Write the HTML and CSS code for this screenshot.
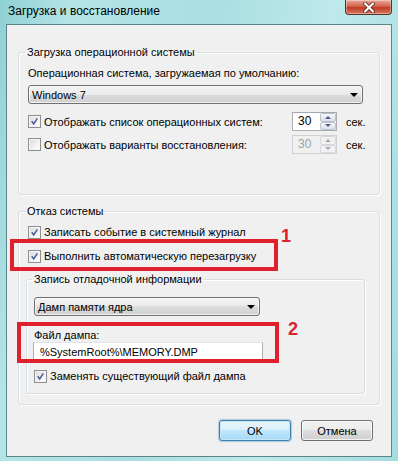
FILE: index.html
```html
<!DOCTYPE html>
<html lang="ru">
<head>
  <meta charset="UTF-8" />
  <title>Загрузка и восстановление</title>
  <link rel="stylesheet" href="styles.css">
</head>
<body>
  <div class="window">
    <div class="titlebar">
      <span class="title">Загрузка и восстановление</span>
      <div class="close-btn">
        <svg width="16" height="11" viewBox="0 0 16 11"><path d="M4 1.5 L12 9.5 M12 1.5 L4 9.5" stroke="#4a1a12" stroke-width="3.6" stroke-linecap="round"/><path d="M4 1.5 L12 9.5 M12 1.5 L4 9.5" stroke="#fff" stroke-width="2.2" stroke-linecap="round"/></svg>
      </div>
    </div>

    <div class="client">
      <fieldset class="group group-boot">
        <legend>Загрузка операционной системы</legend>
        <div class="group-body boot-body">
          <div class="label">Операционная система, загружаемая по умолчанию:</div>
          <div class="combo combo-os"><span>Windows 7</span><i class="arrow"></i></div>
          <div class="row row-spin">
            <label class="check check-wide"><span class="cb"><svg viewBox="0 0 13 13"><path d="M3.2 6.2 L5.6 9.4 L9.8 2.8" fill="none" stroke="#4a5a9a" stroke-width="1.8"/></svg></span>Отображать список операционных систем:</label>
            <div class="spin"><span class="spin-val">30</span><div class="spin-btns"><i class="up"></i><i class="down"></i></div></div>
            <span class="unit">сек.</span>
          </div>
          <div class="row row-spin row-second">
            <label class="check check-wide"><span class="cb"></span>Отображать варианты восстановления:</label>
            <div class="spin spin-off"><span class="spin-val">30</span><div class="spin-btns"><i class="up"></i><i class="down"></i></div></div>
            <span class="unit">сек.</span>
          </div>
        </div>
      </fieldset>

      <fieldset class="group group-fail">
        <legend>Отказ системы</legend>
        <div class="group-body fail-body">
          <label class="check"><span class="cb"><svg viewBox="0 0 13 13"><path d="M3.2 6.2 L5.6 9.4 L9.8 2.8" fill="none" stroke="#4a5a9a" stroke-width="1.8"/></svg></span>Записать событие в системный журнал</label>
          <label class="check check-gap"><span class="cb"><svg viewBox="0 0 13 13"><path d="M3.2 6.2 L5.6 9.4 L9.8 2.8" fill="none" stroke="#4a5a9a" stroke-width="1.8"/></svg></span>Выполнить автоматическую перезагрузку</label>

          <fieldset class="group group-debug">
            <legend>Запись отладочной информации</legend>
            <div class="group-body debug-body">
              <div class="combo combo-dump"><span>Дамп памяти ядра</span><i class="arrow"></i></div>
              <div class="label label-file">Файл дампа:</div>
              <div class="edit">%SystemRoot%\MEMORY.DMP</div>
              <label class="check check-replace"><span class="cb"><svg viewBox="0 0 13 13"><path d="M3.2 6.2 L5.6 9.4 L9.8 2.8" fill="none" stroke="#4a5a9a" stroke-width="1.8"/></svg></span>Заменять существующий файл дампа</label>
            </div>
          </fieldset>
        </div>
      </fieldset>

      <div class="buttons">
        <button class="btn btn-default">OK</button>
        <button class="btn">Отмена</button>
      </div>
    </div>

    <div class="mark mark-1"></div>
    <span class="mark-num num-1">1</span>
    <div class="mark mark-2"></div>
    <span class="mark-num num-2">2</span>
  </div>
</body>
</html>
```

FILE: styles.css
```css
body { margin: 0; font-family: "Liberation Sans", Arial, sans-serif; font-size: 11px; color: #000; }
.window { position: relative; width: 398px; height: 461px; box-sizing: border-box; padding: 0 6px 5px 6px; background: linear-gradient(100deg, #8fd0d4 0%, #b4e4e6 15%, #a9dfe1 45%, #bfe9ea 70%, #a3dcdf 100%); overflow: hidden; }
.titlebar { height: 24px; display: flex; align-items: flex-start; justify-content: space-between; }
.title { margin: 3px 0 0 2px; line-height: 16px; font-size: 12px; }
.close-btn { width: 45px; height: 14px; border: 1px solid #5a3028; border-top: none; border-radius: 0 0 4px 4px; background: linear-gradient(#e9a99a, #d1634c 45%, #c13b22 55%, #d67a62); display: flex; align-items: center; justify-content: center; box-shadow: inset 0 0 0 1px rgba(255,255,255,0.35); }

.client { height: 433px; box-sizing: border-box; border: 1px solid #5c8589; background: #f0f0f0; padding: 19px 11px 0 11px; }

.group { margin: 0; padding: 0; border: 1px solid #d5dfe5; border-radius: 3px; box-shadow: inset 1px 1px 0 #fff, 1px 1px 0 #fff; min-width: 0; }
.group legend { padding: 0 2px; margin-left: 6px; line-height: 16px; }
.group-body { display: flex; flex-direction: column; align-items: flex-start; }
.boot-body { padding: 5px 16px 40px 9px; }
.label { line-height: 16px; }

.combo { box-sizing: border-box; height: 19px; border: 1px solid #707070; border-radius: 3px; background: linear-gradient(#f2f2f2, #ebebeb 50%, #dddddd 50%, #cfcfcf); box-shadow: inset 0 0 0 1px rgba(255,255,255,0.7); display: flex; align-items: center; justify-content: space-between; padding: 0 4px 0 3px; }
.combo span { line-height: 16px; }
.arrow { width: 0; height: 0; border-left: 4px solid transparent; border-right: 4px solid transparent; border-top: 4px solid #000; }
.combo-os { width: 335px; margin-top: 4px; }

.row { display: flex; align-items: center; }
.row-spin { margin-top: 8px; height: 19px; }
.row-second { margin-top: 4px; }

.check { display: flex; align-items: center; line-height: 16px; height: 16px; white-space: nowrap; }
.check-wide { width: 264px; }
.cb { width: 13px; height: 13px; flex: none; box-sizing: border-box; border: 1px solid #8e8f8f; background: linear-gradient(135deg, #d8d8d8, #f7f7f7 70%, #ffffff); box-shadow: inset 0 0 0 1px #f4f4f4; margin-right: 3px; display: flex; }
.cb svg { width: 11px; height: 11px; }

.spin { box-sizing: border-box; width: 45px; height: 19px; border: 1px solid #abadb3; border-top-color: #a3a7b2; background: #fff; display: flex; }
.spin-val { flex: 1; padding-left: 5px; line-height: 17px; font-size: 12px; }
.spin-btns { width: 16px; display: flex; flex-direction: column; }
.spin-btns i { flex: 1; border: 1px solid #bcc3cc; border-radius: 2px; background: linear-gradient(#f4f6f9, #dde3ea); display: flex; align-items: center; justify-content: center; }
.spin-btns i::after { content: ""; border-left: 3px solid transparent; border-right: 3px solid transparent; }
.spin-btns .up::after { border-bottom: 3px solid #4f5f8a; }
.spin-btns .down::after { border-top: 3px solid #4f5f8a; }
.spin-off { background: #f0f0f0; border-color: #cfd1d6; color: #a0a0a0; }
.spin-off .spin-btns i { border-color: #d6d9dd; background: #f2f2f2; }
.spin-off .spin-btns .up::after { border-bottom-color: #a8a8a8; }
.spin-off .spin-btns .down::after { border-top-color: #a8a8a8; }
.unit { margin-left: 9px; line-height: 16px; }

.group-fail { margin-top: 8px; }
.fail-body { padding: 5px 14px 10px 9px; align-items: stretch; }
.check-gap { margin-top: 8px; }

.group-debug { margin: 7px 0 0 -2px; }
.group-debug legend { margin-left: 5px; }
.debug-body { padding: 10px 0 9px 7px; }
.combo-dump { width: 226px; }
.label-file { margin-top: 12px; line-height: 14px; }
.edit { box-sizing: border-box; width: 230px; height: 20px; border: 1px solid #abadb3; border-top-color: #e2e3ea; background: #fff; padding-left: 6px; line-height: 18px; margin-left: -1px; }
.check-replace { margin-top: 6px; }

.buttons { display: flex; justify-content: flex-end; gap: 10px; margin-top: 15px; padding-right: 7px; }
.btn { box-sizing: border-box; width: 72px; height: 21px; border: 1px solid #707070; border-radius: 3px; background: linear-gradient(#f2f2f2, #ebebeb 50%, #dddddd 50%, #cfcfcf); box-shadow: inset 0 0 0 1px rgba(255,255,255,0.75); font-family: inherit; font-size: 11px; padding: 0; color: #000; }
.btn-default { border-color: #3c7fb1; background: linear-gradient(#eaf6fd, #d9f0fc 50%, #bee6fd 50%, #a7d9f5); box-shadow: inset 0 0 0 1px #c4e5f6, 0 0 1px 1px rgba(60,127,177,0.35); }

.mark { position: absolute; border: 4px solid #e0202c; box-sizing: border-box; }
.mark-1 { left: 10px; top: 239px; width: 268px; height: 32px; }
.mark-2 { left: 17px; top: 322px; width: 262px; height: 41px; }
.mark-num { position: absolute; color: #d8232e; font-family: "Liberation Sans", sans-serif; font-weight: bold; font-size: 18px; line-height: 18px; }
.num-1 { left: 281px; top: 227px; }
.num-2 { left: 288px; top: 320px; }
```
